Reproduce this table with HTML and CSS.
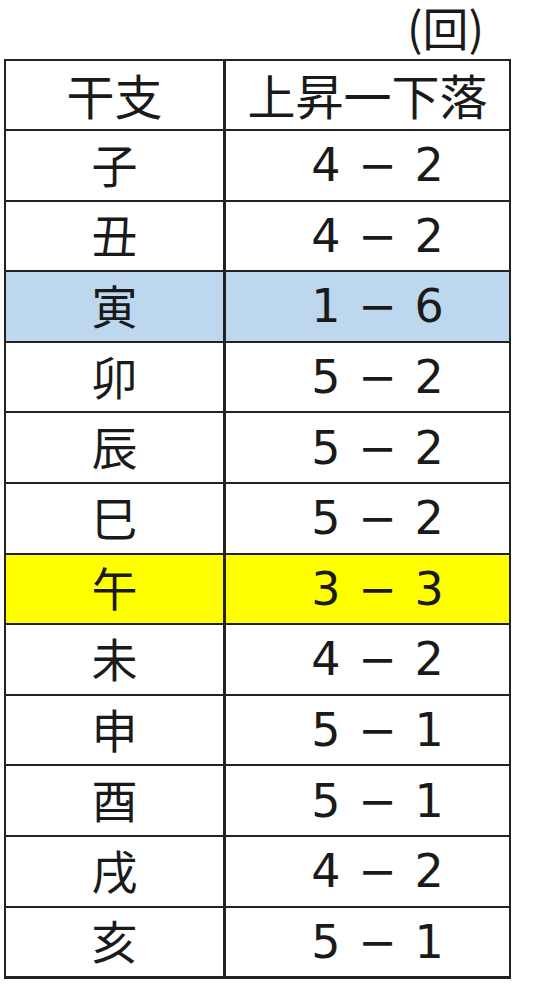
FILE: index.html
```html
<!DOCTYPE html>
<html lang="ja">
<head>
<meta charset="utf-8">
<title>干支 上昇－下落</title>
<link rel="stylesheet" href="styles.css">
</head>
<body>
<div class="unit">(回)</div>
<div class="table">
  <div class="cell head">干支</div><div class="cell head">上昇一下落</div>
  <div class="cell">子</div><div class="cell num">4 − 2</div>
  <div class="cell">丑</div><div class="cell num">4 − 2</div>
  <div class="cell blue">寅</div><div class="cell num blue">1 − 6</div>
  <div class="cell">卯</div><div class="cell num">5 − 2</div>
  <div class="cell">辰</div><div class="cell num">5 − 2</div>
  <div class="cell">巳</div><div class="cell num">5 − 2</div>
  <div class="cell yellow">午</div><div class="cell num yellow">3 − 3</div>
  <div class="cell">未</div><div class="cell num">4 − 2</div>
  <div class="cell">申</div><div class="cell num">5 − 1</div>
  <div class="cell">酉</div><div class="cell num">5 − 1</div>
  <div class="cell">戌</div><div class="cell num">4 − 2</div>
  <div class="cell">亥</div><div class="cell num">5 − 1</div>
</div>
</body>
</html>
```
FILE: styles.css
```css
html, body {
  margin: 0;
  padding: 0;
  background: #ffffff;
}
body {
  width: 540px;
  font-family: "Noto Sans CJK JP", "Noto Sans", sans-serif;
  color: #1a1a1a;
}
.unit {
  text-align: right;
  padding-right: 56px;
  padding-top: 2px;
  font-size: 46px;
  line-height: 48px;
  margin-bottom: 9px;
}
.table {
  margin-left: 4px;
  width: 507px;
  box-sizing: border-box;
  display: grid;
  grid-template-columns: 217px 283px;
  grid-template-rows: 68px repeat(12, 68.6px);
  gap: 2px 3px;
  background: #222222;
  border: 2px solid #222222;
  border-bottom-width: 3px;
}
.cell {
  background: #ffffff;
  display: flex;
  align-items: center;
  justify-content: center;
  font-size: 46px;
  line-height: 1;
  padding-bottom: 5px;
  box-sizing: border-box;
}
.head {
  font-size: 48px;
  padding-bottom: 3px;
}
.num {
  font-family: "DejaVu Sans", "Noto Sans CJK JP", sans-serif;
  font-size: 46px;
  word-spacing: 3px;
  padding-left: 20px;
  padding-bottom: 0;
}
.blue {
  background: #bdd7ee;
}
.yellow {
  background: #ffff00;
}
```
